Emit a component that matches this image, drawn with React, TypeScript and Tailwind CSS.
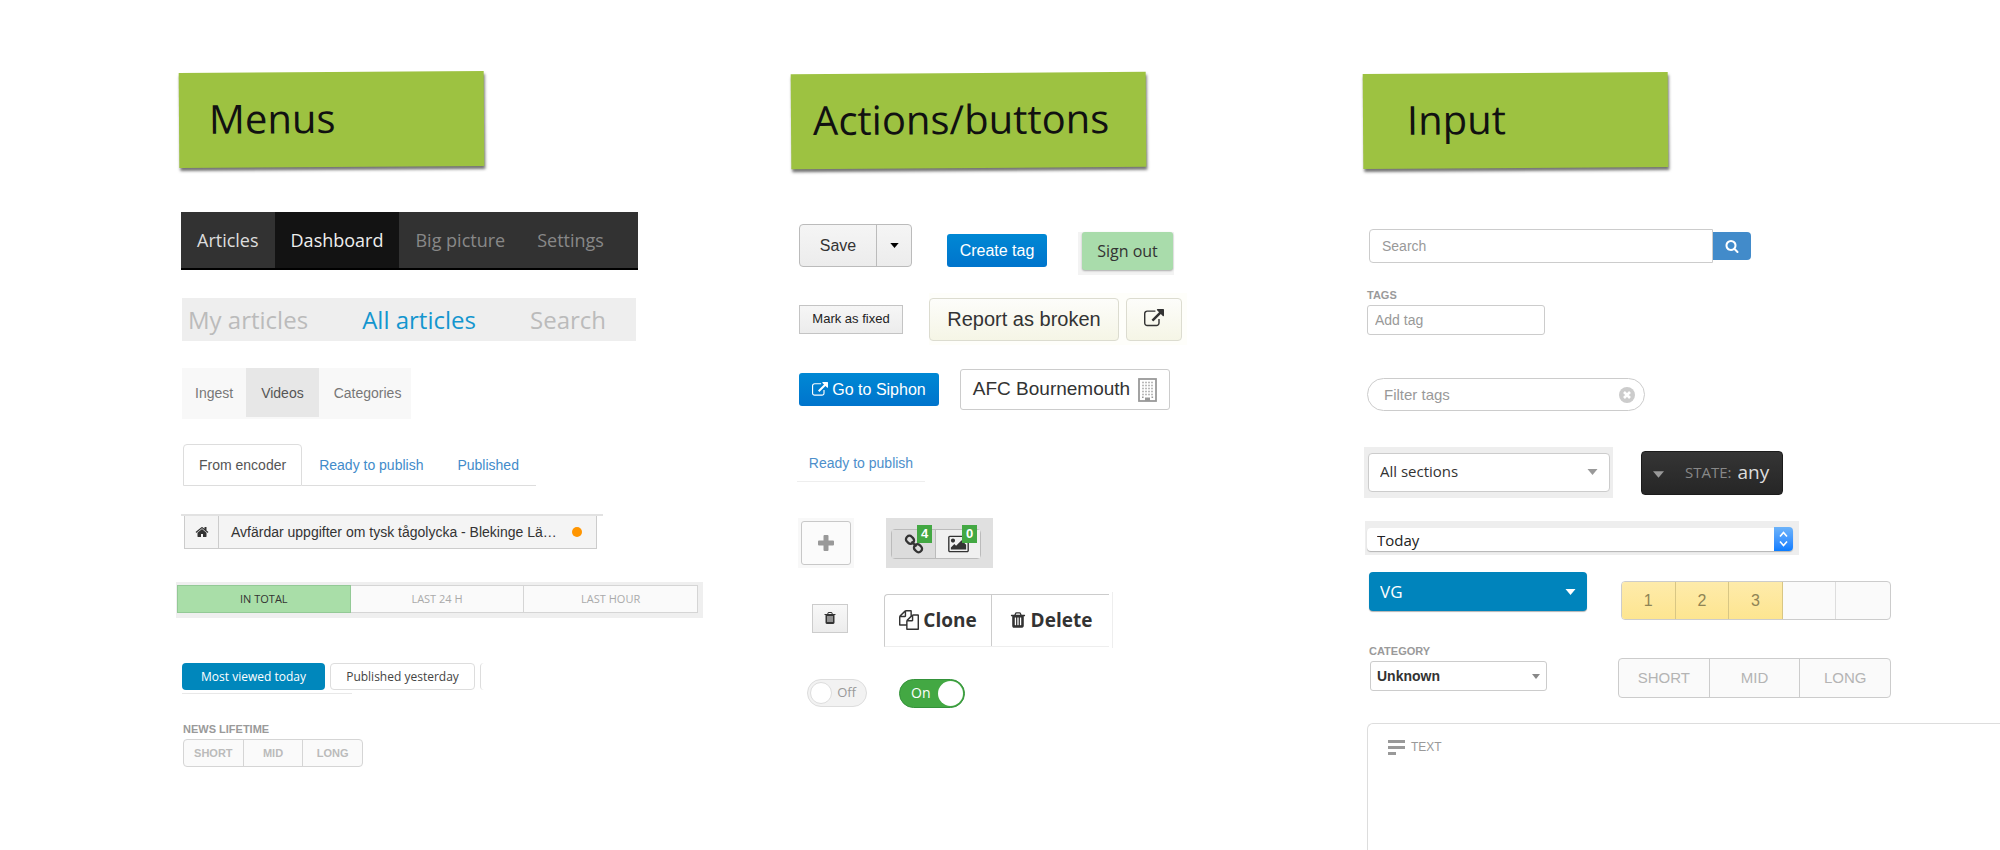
import type { ReactNode } from "react";

const openSans = "font-['Open_Sans',sans-serif]";
const helvetica = "font-['Liberation_Sans',Arial,sans-serif]";

const icons = {
  external:
    "M1408 928v320q0 119-84.5 203.5t-203.5 84.5h-832q-119 0-203.5-84.5t-84.5-203.5v-832q0-119 84.5-203.5t203.5-84.5h704q14 0 23 9t9 23v64q0 14-9 23t-23 9h-704q-66 0-113 47t-47 113v832q0 66 47 113t113 47h832q66 0 113-47t47-113v-320q0-14 9-23t23-9h64q14 0 23 9t9 23zm384-864v512q0 26-19 45t-45 19-45-19l-176-176-652 652q-10 10-23 10t-23-10l-114-114q-10-10-10-23t10-23l652-652-176-176q-19-19-19-45t19-45 45-19h512q26 0 45 19t19 45z",
  trash:
    "M704 1376v-704q0-14-9-23t-23-9h-64q-14 0-23 9t-9 23v704q0 14 9 23t23 9h64q14 0 23-9t9-23zm256 0v-704q0-14-9-23t-23-9h-64q-14 0-23 9t-9 23v704q0 14 9 23t23 9h64q14 0 23-9t9-23zm256 0v-704q0-14-9-23t-23-9h-64q-14 0-23 9t-9 23v704q0 14 9 23t23 9h64q14 0 23-9t9-23zm-544-992h448l-48-117q-7-9-17-11h-317q-10 2-17 11zm928 32v64q0 14-9 23t-23 9h-96v948q0 83-47 143.5t-113 60.5h-832q-66 0-113-58.5t-47-141.5v-952h-96q-14 0-23-9t-9-23v-64q0-14 9-23t23-9h309l70-167q15-37 54-63t79-26h320q40 0 79 26t54 63l70 167h309q14 0 23 9t9 23z",
  home:
    "M1472 992v480q0 26-19 45t-45 19h-384v-384h-256v384h-384q-26 0-45-19t-19-45v-480q0-1 .5-3t.5-3l575-474 575 474q1 2 1 6zm223-69l-62 74q-8 9-21 11h-3q-13 0-21-7l-692-577-692 577q-12 8-24 7-13-2-21-11l-62-74q-8-10-7-23.5t11-21.5l719-599q32-26 76-26t76 26l244 204v-195q0-14 9-23t23-9h192q14 0 23 9t9 23v408l219 182q10 8 11 21.5t-7 23.5z",
  copy:
    "M1696 384q40 0 68 28t28 68v1216q0 40-28 68t-68 28h-960q-40 0-68-28t-28-68v-288h-544q-40 0-68-28t-28-68v-672q0-40 20-88t48-76l408-408q28-28 76-48t88-20h416q40 0 68 28t28 68v328q68-40 128-40h416zm-544 213l-299 299h299v-299zm-640-384l-299 299h299v-299zm196 647l316-316v-416h-384v416q0 40-28 68t-68 28h-416v640h512v-256q0-40 20-88t48-76zm956 804v-1152h-384v416q0 40-28 68t-68 28h-416v640h896z",
  search:
    "M1216 832q0-185-131.5-316.5t-316.5-131.5-316.5 131.5-131.5 316.5 131.5 316.5 316.5 131.5 316.5-131.5 131.5-316.5zm512 832q0 52-38 90t-90 38q-54 0-90-38l-343-342q-179 124-399 124-143 0-273.5-55.5t-225-150-150-225-55.5-273.5 55.5-273.5 150-225 225-150 273.5-55.5 273.5 55.5 225 150 150 225 55.5 273.5q0 220-124 399l343 343q37 37 37 90z",
};

function Icon({ name, className }: { name: keyof typeof icons; className: string }) {
  return (
    <svg viewBox="0 0 1792 1792" fill="currentColor" aria-hidden="true" className={className}>
      <path d={icons[name]} />
    </svg>
  );
}

function ImageIcon() {
  return (
    <svg viewBox="-64 64 1920 1664" fill="currentColor" aria-hidden="true" className="h-[18px] w-[21px]">
      <path d="M576 576q0 80-56 136t-136 56-136-56-56-136 56-136 136-56 136 56 56 136zm1024 384v448h-1408v-192l320-320 160 160 512-512zm96-704h-1600q-13 0-22.5 9.5t-9.5 22.5v1216q0 13 9.5 22.5t22.5 9.5h1600q13 0 22.5-9.5t9.5-22.5v-1216q0-13-9.5-22.5t-22.5-9.5zm160 32v1216q0 66-47 113t-113 47h-1600q-66 0-113-47t-47-113v-1216q0-66 47-113t113-47h1600q66 0 113 47t47 113z" />
    </svg>
  );
}

function ChainIcon() {
  return (
    <svg viewBox="0 0 20 20" fill="none" stroke="currentColor" strokeWidth="2.3" aria-hidden="true" className="h-5 w-5">
      <rect x="1.8" y="2.4" width="8.400" height="6.8" rx="3.2" transform="rotate(45 6 5.8)" />
      <rect x="9.8" y="10.8" width="8.400" height="6.8" rx="3.2" transform="rotate(45 14 14.200)" />
      <path d="M7.500 7.500l5 5" />
    </svg>
  );
}

function BuildingIcon() {
  const columns = [4.5, 7.5, 10.5, 13.5];
  const rows = [4, 7, 10, 13, 16];
  return (
    <svg viewBox="0 0 19 24" aria-hidden="true" className="h-6 w-[19px]">
      <rect x="1" y="1" width="17" height="22" fill="#fff" stroke="#999" strokeWidth="1.800" />
      {rows.map((y) => columns.map((x) => <rect key={`${x}-${y}`} x={x - 0.3} y={y - 0.3} width="1.6" height="1.6" fill="#aaa" />))}
      <path d="M4 18.5h1.6v1.6H4zM13.500 18.5h1.6v1.6h-1.600zM7 19.500h5v3.500H7z" fill="#999" />
    </svg>
  );
}

function Caret({ className }: { className: string }) {
  return (
    <svg viewBox="0 0 10 6" fill="currentColor" aria-hidden="true" className={className}>
      <path d="M0 0h10L5 6z" />
    </svg>
  );
}

function Note({ children, className }: { children: ReactNode; className: string }) {
  return (
    <h2
      className={`flex h-[95px] -rotate-[0.4deg] items-center bg-[#9dc241] pb-1 font-['Open_Sans',cursive] text-[40px] leading-none font-medium text-[#111] shadow-[1px_3px_3px_rgba(0,0,0,0.55)] ${className}`}
    >
      {children}
    </h2>
  );
}

function Badge({ children }: { children: ReactNode }) {
  return (
    <span className="absolute -top-[5px] right-[3px] flex h-[18px] w-[15px] items-center justify-center bg-[#43a843] text-[13px] font-bold text-white">
      {children}
    </span>
  );
}

function Menus() {
  return (
    <section className="flex flex-col items-start pt-[72px]">
      <Note className="ml-[5px] w-[305px] pl-[30px]">Menus</Note>

      <nav className={`mt-[45px] ml-[7px] flex h-[58px] w-[457px] border-b-2 border-black bg-[#323232] text-lg text-[#888] ${openSans}`}>
        <a href="#articles" className="flex items-center px-4 text-[#ddd]">Articles</a>
        <a href="#dashboard" className="flex items-center bg-[#131313] px-4 font-medium text-[#eee]">Dashboard</a>
        <a href="#big-picture" className="flex items-center px-4">Big picture</a>
        <a href="#settings" className="flex items-center px-4">Settings</a>
      </nav>

      <nav className={`mt-7 ml-2 flex h-[43px] w-[454px] items-center justify-between bg-[#eee] pr-[30px] pl-1.5 text-2xl text-[#bbb] ${openSans}`}>
        <a href="#mine">My articles</a>
        <a href="#all" className="text-[#1496cf]">All articles</a>
        <a href="#search">Search</a>
      </nav>

      <nav className={`mt-[27px] ml-2 flex h-[51px] w-[229px] bg-[#f8f8f8] pb-0.5 text-sm text-[#777] ${helvetica}`}>
        <a href="#ingest" className="flex items-center px-[13px]">Ingest</a>
        <a href="#videos" className="flex items-center bg-[#e7e7e7] px-[15px] text-[#555]">Videos</a>
        <a href="#categories" className="flex items-center px-[15px]">Categories</a>
      </nav>

      <nav className={`mt-[25px] ml-[9px] flex h-[42px] w-[353px] text-sm text-[#428bca] ${helvetica}`}>
        <a href="#encoder" className="flex items-center rounded-t border border-[#ddd] px-[15px] text-[#555]">From encoder</a>
        <a href="#ready" className="flex items-center border-b border-[#ddd] px-[17px]">Ready to publish</a>
        <a href="#published" className="flex flex-1 items-center border-b border-[#ddd] px-[17px]">Published</a>
      </nav>

      <div className="mt-7 ml-[7px] w-[422px] border-t-2 border-[#e2e2e2] pl-[3px]">
        <nav className={`flex h-[33px] w-[413px] border-x border-b border-[#ccc] bg-[#f4f4f4] text-sm text-[#333] ${helvetica}`}>
          <a href="#home" aria-label="Home" className="flex w-[34px] items-center justify-center border-r border-[#ccc]">
            <Icon name="home" className="h-[14px] w-[14px]" />
          </a>
          <a href="#story" className="flex flex-1 items-center justify-between pr-[14px] pl-3">
            Avfärdar uppgifter om tysk tågolycka - Blekinge Lä…
            <span className="h-2.5 w-2.5 rounded-full bg-[#ff9500]" />
          </a>
        </nav>
      </div>

      <div className="mt-[33px] ml-0.5 bg-[#efefef] pt-[3px] pr-[5px] pb-[5px] pl-px">
        <div className={`grid w-[521px] grid-cols-3 text-[11px] text-[#aaa] ${openSans}`}>
          <button className="h-7 border border-[#93c996] bg-[#a9dea8] text-[#333]">IN TOTAL</button>
          <button className="h-7 border-y border-r border-[#d5d5d5] bg-[#fafafa]">LAST 24 H</button>
          <button className="h-7 border-y border-r border-[#d5d5d5] bg-[#fafafa]">LAST HOUR</button>
        </div>
      </div>

      <div className={`mt-[45px] ml-2 flex h-[31px] gap-[5px] text-xs ${openSans}`}>
        <div className="w-[143px]">
          <button className="h-[27px] w-full rounded bg-[#0087bc] font-medium text-white">Most viewed today</button>
          <div className="mt-[3px] h-px w-[170px] bg-[#e8e8e8]" />
        </div>
        <button className="h-[27px] w-[145px] rounded border border-[#ddd] bg-white text-[#444]">Published yesterday</button>
        <div className="h-[27px] w-1 rounded-l border-l border-[#ddd]" />
      </div>

      <div className={`mt-[29px] ml-[9px] font-bold text-[#9a9a9a] ${helvetica}`}>
        <h3 id="lifetime" className="text-[11px] leading-3">NEWS LIFETIME</h3>
        <div role="group" aria-labelledby="lifetime" className="mt-1 flex h-7 w-[180px] divide-x divide-[#d5d5d5] rounded border border-[#d5d5d5] bg-[#fafafa] text-[11px] text-[#bbb]">
          <button className="flex-1">SHORT</button>
          <button className="flex-1">MID</button>
          <button className="flex-1">LONG</button>
        </div>
      </div>
    </section>
  );
}

function Actions() {
  return (
    <section className={`flex flex-col items-start pt-[73px] ${helvetica}`}>
      <Note className="w-[355px] pl-[22px]">Actions/buttons</Note>

      <div className="mt-14 ml-2 flex h-[51px] items-start">
        <div className="flex h-[43px] rounded-sm border border-[#bbb] bg-linear-to-b from-[#f5f5f5] to-[#ececec] text-[#333]">
          <button className="w-[77px] border-r border-[#bbb] text-base">Save</button>
          <button aria-label="More save options" className="flex w-[34px] items-center justify-center text-black">
            <Caret className="h-[5px] w-[9px]" />
          </button>
        </div>
        <button className="mt-2.5 ml-[35px] h-[33px] w-[100px] rounded-[3px] bg-linear-to-b from-[#0088d4] to-[#0074cc] text-base text-white">Create tag</button>
        <div className="mt-2 ml-[31px] bg-[#f3f3f3] pr-px pb-[5px] pl-1">
          <button className={`h-[38px] w-[91px] rounded-[3px] bg-[#a9dcab] text-base text-[#333] shadow-[0_1px_2px_rgba(0,0,0,0.3)] ${openSans}`}>Sign out</button>
        </div>
      </div>

      <div className="mt-[18px] ml-2 flex h-[52px] items-center text-[#333]">
        <button className="h-[29px] w-[104px] border border-[#c4c4c4] bg-linear-to-b from-[#f6f6f6] to-[#ececec] text-[13px] text-[#222]">Mark as fixed</button>
        <div className="ml-[26px] flex h-[52px] items-center gap-[7px] bg-[#fefefa] pr-[5px]">
          <button className="h-[43px] w-[190px] rounded border border-[#dcdcd0] bg-linear-to-b from-[#fdfdfa] to-[#f5f5e6] text-xl">Report as broken</button>
          <button aria-label="Open in new window" className="flex h-[43px] w-14 items-center justify-center rounded border border-[#dcdcd0] bg-linear-to-b from-[#fdfdfa] to-[#f5f5e6]">
            <Icon name="external" className="h-5 w-5" />
          </button>
        </div>
      </div>

      <div className="mt-6 ml-2 flex h-[41px] items-center">
        <button className="flex h-[33px] w-[140px] items-center justify-center gap-1 rounded-[3px] bg-linear-to-b from-[#0088d4] to-[#0074cc] text-base text-white">
          <Icon name="external" className="h-4 w-4" />
          Go to Siphon
        </button>
        <button className="ml-[21px] flex h-[41px] w-[210px] items-center justify-center gap-2 rounded-[3px] border border-[#ccc] text-[19px] text-[#333]">
          AFC Bournemouth
          <BuildingIcon />
        </button>
      </div>

      <a href="#ready" className="mt-[35px] ml-[6px] flex h-[37px] w-32 items-center justify-center border-b border-[#eee] text-sm text-[#4d8fcb]">Ready to publish</a>

      <div className="mt-9 ml-[7px] flex h-[50px]">
        <div className="bg-[#f8f8f8] p-[3px]">
          <button aria-label="Add" className="flex h-11 w-[50px] items-center justify-center rounded-[3px] border border-[#c8c8c8] bg-[#fbfbfb] text-[#999]">
            <svg viewBox="0 0 16 16" fill="currentColor" aria-hidden="true" className="h-4 w-4">
              <path d="M6.5 0h3a1 1 0 0 1 1 1v4.5H15a1 1 0 0 1 1 1v3a1 1 0 0 1-1 1h-4.500V15a1 1 0 0 1-1 1h-3a1 1 0 0 1-1-1v-4.500H1a1 1 0 0 1-1-1v-3a1 1 0 0 1 1-1h4.500V1a1 1 0 0 1 1-1z" />
            </svg>
          </button>
        </div>
        <div className="ml-8 w-[107px] bg-[#e0e0e0] pt-[11px] pl-[5px] text-[#333]">
          <div className="flex h-[30px] w-[90px] rounded-sm border border-[#bbb]">
            <button aria-label="Links" className="relative flex w-11 items-center justify-center border-r border-[#bbb] bg-[#dcdcdc]">
              <ChainIcon />
              <Badge>4</Badge>
            </button>
            <button aria-label="Images" className="relative flex flex-1 items-center justify-center bg-[#f0f0f0]">
              <ImageIcon />
              <Badge>0</Badge>
            </button>
          </div>
        </div>
      </div>

      <div className="mt-6 ml-[21px] flex h-14 items-center text-[#333]">
        <button aria-label="Remove" className="mb-1 flex h-[29px] w-9 items-center justify-center border border-[#ccc] bg-linear-to-b from-[#f8f8f8] to-[#ececec]">
          <Icon name="trash" className="h-[14px] w-[14px]" />
        </button>
        <div className="ml-9 flex h-14 items-center border-r border-[#eee] pr-[3px]">
          <div className={`flex h-[53px] rounded-tl border-t border-b border-l border-[#ccc] border-b-[#eee] text-[19px] font-bold ${openSans}`}>
            <button className="flex w-[107px] items-center justify-center gap-1 border-r border-[#ccc]">
              <Icon name="copy" className="h-5 w-5" />
              Clone
            </button>
            <button className="flex w-[117px] items-center justify-center gap-1">
              <Icon name="trash" className="h-[18px] w-[18px]" />
              Delete
            </button>
          </div>
        </div>
      </div>

      <div className={`mt-[31px] ml-4 flex h-7 items-center ${openSans}`}>
        <label className="flex h-7 w-[60px] items-center justify-between rounded-full border border-[#ddd] bg-[#f2f2f2] pr-2.5 pl-0.5 text-[13px] text-[#999]">
          <input type="checkbox" role="switch" className="sr-only" />
          <span className="h-[22px] w-[22px] rounded-full border border-[#ddd] bg-white" />
          Off
        </label>
        <label className="ml-8 flex h-[29px] w-[66px] items-center justify-between rounded-full border border-[#34923a] bg-[#43a843] pr-px pl-[11px] text-sm text-white">
          <input type="checkbox" role="switch" defaultChecked className="sr-only" />
          On
          <span className="h-[25px] w-[25px] rounded-full bg-white" />
        </label>
      </div>
    </section>
  );
}

function Inputs() {
  return (
    <section className={`flex min-w-0 flex-col items-start pt-[73px] ${helvetica}`}>
      <Note className="w-[305px] pl-[44px]">Input</Note>

      <div className="mt-[61px] ml-1.5 flex h-[34px] items-center">
        <input type="text" aria-label="Search" placeholder="Search" className="h-[34px] w-[344px] rounded-l border border-[#ccc] px-3 text-sm placeholder:text-[#999]" />
        <button aria-label="Search" className="flex h-7 w-[38px] items-center justify-center rounded-r bg-[#428bca] text-white">
          <Icon name="search" className="h-[14px] w-[14px]" />
        </button>
      </div>

      <label htmlFor="tags" className="mt-[26px] ml-1 text-[11px] leading-3 font-bold text-[#9a9a9a]">TAGS</label>
      <input id="tags" type="text" placeholder="Add tag" className="mt-1 ml-1 h-[30px] w-[178px] rounded-[3px] border border-[#ccc] px-[7px] text-sm placeholder:text-[#999]" />

      <div className="relative mt-[43px] ml-1">
        <input type="text" aria-label="Filter tags" placeholder="Filter tags" className="block h-[33px] w-[278px] rounded-full border border-[#ccc] px-4 text-[15px] placeholder:text-[#999]" />
        <button aria-label="Clear filter" className="absolute top-[9px] right-2.5">
          <svg viewBox="0 0 16 16" aria-hidden="true" className="h-4 w-4">
            <circle cx="8" cy="8" r="8" fill="#ccc" />
            <path d="M5 5l6 6M11 5l-6 6" stroke="#fff" strokeWidth="2.6" />
          </svg>
        </button>
      </div>

      <div className={`mt-9 flex h-[51px] items-center ${openSans}`}>
        <div className="ml-px flex h-[51px] items-center bg-[#eee] pr-[3px] pl-[4px]">
          <div className="relative">
            <select aria-label="Section" className="block h-[39px] w-[242px] appearance-none rounded border border-[#ccc] bg-white pr-8 pb-0.5 pl-[11px] text-[15px] text-[#333]">
              <option>All sections</option>
            </select>
            <Caret className="pointer-events-none absolute top-4 right-3 h-1.5 w-[11px] text-[#999]" />
          </div>
        </div>
        <div className="relative ml-7 flex h-11 w-[142px] items-center gap-1.5 rounded border border-[#1c1c1c] bg-linear-to-b from-[#353535] to-[#262626] pl-[43px]">
          <Caret className="pointer-events-none absolute top-[19px] left-[11px] h-[7px] w-[11px] text-[#999]" />
          <label htmlFor="state" className="text-[15px] text-[#888]">STATE:</label>
          <select id="state" className="w-9 appearance-none bg-transparent pb-0.5 text-[19px] leading-6 text-[#ddd]">
            <option>any</option>
          </select>
        </div>
      </div>

      <div className="mt-[23px] ml-0.5 bg-[#eee] pt-[7px] pr-[6px] pb-1 pl-0.5">
        <div className="relative">
          <select aria-label="Period" className={`block h-[23px] w-[426px] appearance-none rounded bg-white px-2.5 text-[15px] leading-5 text-[#222] shadow-[0_1px_1px_rgba(0,0,0,0.25)] ${openSans}`}>
            <option>Today</option>
          </select>
          <svg viewBox="0 0 19 24" fill="none" stroke="#fff" strokeWidth="1.6" aria-hidden="true" className="pointer-events-none absolute -top-px right-0 h-6 w-[19px] rounded-r bg-linear-to-b from-[#6cb3fa] to-[#077cff]">
            <path d="M6 9.500L9.500 5.500L13 9.500M6 14.500L9.500 18.500L13 14.500" />
          </svg>
        </div>
      </div>

      <div className="mt-[17px] ml-1.5 flex h-12">
        <div className="relative">
          <select aria-label="Publication" className={`block h-[39px] w-[218px] appearance-none rounded bg-[#0084bc] pl-[11px] text-[17px] text-white shadow-[0_1px_1px_rgba(0,0,0,0.3)] ${openSans}`}>
            <option>VG</option>
          </select>
          <Caret className="pointer-events-none absolute top-[17px] right-[11px] h-1.5 w-[11px] text-white" />
        </div>
        <div className="mt-[9px] ml-[34px] grid h-[39px] w-[270px] grid-cols-5 overflow-hidden rounded border border-[#ccc] bg-[#fafafa] text-base text-[#8f8455]">
          <button className="border-r border-[#d8c684] bg-linear-to-b from-[#feebaa] to-[#fde590]">1</button>
          <button className="border-r border-[#d8c684] bg-linear-to-b from-[#feebaa] to-[#fde590]">2</button>
          <button className="border-r border-[#d8c684] bg-linear-to-b from-[#feebaa] to-[#fde590]">3</button>
          <button aria-label="4" className="border-r border-[#ddd]" />
          <button aria-label="5" />
        </div>
      </div>

      <div className="mt-[25px] ml-1.5 flex h-[53px]">
        <div>
          <label htmlFor="category" className="block text-[11px] leading-3 font-bold text-[#9a9a9a]">CATEGORY</label>
          <div className="relative mt-1 ml-px">
            <select id="category" className="block h-[30px] w-[177px] appearance-none rounded-[3px] border border-[#ccc] bg-white pl-[6px] text-sm font-bold text-[#333]">
              <option>Unknown</option>
            </select>
            <Caret className="pointer-events-none absolute top-[13px] right-[7px] h-[5px] w-2 text-[#888]" />
          </div>
        </div>
        <div className="mt-[13px] ml-[71px] flex h-10 w-[273px] divide-x divide-[#ccc] rounded border border-[#ccc] bg-[#fafafa] text-[15px] text-[#b4b4b4]">
          <button className="flex-1">SHORT</button>
          <button className="flex-1">MID</button>
          <button className="flex-1">LONG</button>
        </div>
      </div>

      <div className="mt-[25px] ml-1 flex flex-1 flex-col self-stretch rounded-tl-md border-t border-l border-[#ddd] px-5 pt-[15px]">
        <label htmlFor="body-text" className="flex items-center gap-1.5 text-xs leading-4 text-[#999]">
          <svg viewBox="0 0 17 15" fill="currentColor" aria-hidden="true" className="h-[15px] w-[17px]">
            <path d="M0 0h17v3H0zM0 6h17v3H0zM0 12h8v3H0z" />
          </svg>
          TEXT
        </label>
        <textarea id="body-text" className="min-h-20 w-full flex-1 resize-none bg-transparent pt-2 text-sm outline-none" />
      </div>
    </section>
  );
}

export default function App() {
  return (
    <main className="grid min-h-screen grid-cols-[617fr_572fr_637fr] overflow-hidden bg-white pl-[174px]">
      <Menus />
      <Actions />
      <Inputs />
    </main>
  );
}
